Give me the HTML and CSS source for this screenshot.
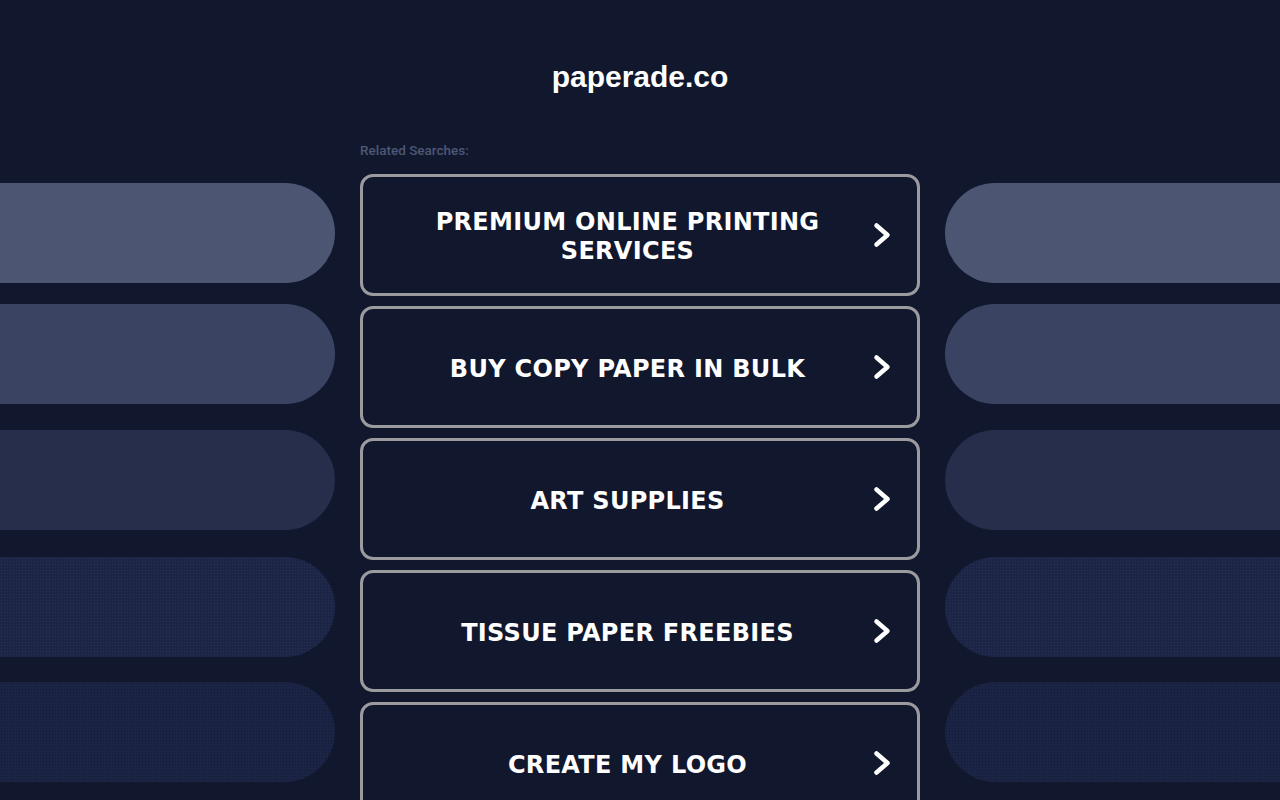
FILE: index.html
```html
<!DOCTYPE html>
<html lang="en">
<head>
<meta charset="utf-8">
<title>paperade.co</title>
<link rel="stylesheet" href="styles.css">
</head>
<body>
<div class="page">
  <aside class="side side-left">
    <div class="pill pill-1"></div>
    <div class="pill pill-2"></div>
    <div class="pill pill-3"></div>
    <div class="pill pill-4"></div>
    <div class="pill pill-5"></div>
  </aside>
  <main class="center">
    <h1 class="domain">paperade.co</h1>
    <div class="related">Related Searches:</div>
    <ul class="links">
      <li><a class="link" href="#"><span class="label">PREMIUM ONLINE PRINTING SERVICES</span><svg class="chev" viewBox="0 0 18 26"><path d="M3.5 3.5 L14.5 13 L3.5 22.5"/></svg></a></li>
      <li><a class="link" href="#"><span class="label">BUY COPY PAPER IN BULK</span><svg class="chev" viewBox="0 0 18 26"><path d="M3.5 3.5 L14.5 13 L3.5 22.5"/></svg></a></li>
      <li><a class="link" href="#"><span class="label">ART SUPPLIES</span><svg class="chev" viewBox="0 0 18 26"><path d="M3.5 3.5 L14.5 13 L3.5 22.5"/></svg></a></li>
      <li><a class="link" href="#"><span class="label">TISSUE PAPER FREEBIES</span><svg class="chev" viewBox="0 0 18 26"><path d="M3.5 3.5 L14.5 13 L3.5 22.5"/></svg></a></li>
      <li><a class="link" href="#"><span class="label">CREATE MY LOGO</span><svg class="chev" viewBox="0 0 18 26"><path d="M3.5 3.5 L14.5 13 L3.5 22.5"/></svg></a></li>
    </ul>
  </main>
  <aside class="side side-right">
    <div class="pill pill-1"></div>
    <div class="pill pill-2"></div>
    <div class="pill pill-3"></div>
    <div class="pill pill-4"></div>
    <div class="pill pill-5"></div>
  </aside>
</div>
</body>
</html>
```
FILE: styles.css
```css
html, body {
  margin: 0;
  padding: 0;
  background: #11172d;
  overflow: hidden;
}
.page {
  display: grid;
  grid-template-columns: 335px 560px 335px;
  column-gap: 25px;
  height: 800px;
}
.side {
  display: flex;
  flex-direction: column;
  padding-top: 183px;
}
.pill {
  height: 100px;
  flex: none;
}
.side-left .pill { border-radius: 0 50px 50px 0; }
.side-right .pill { border-radius: 50px 0 0 50px; }
.pill-1 { background: #4c5672; }
.pill-2 { background: #3a4361; margin-top: 21px; }
.pill-3 { background: #262e4c; margin-top: 26px; }
.pill-4 {
  background-color: #1c2546;
  background-image: radial-gradient(circle, rgba(60,75,110,0.35) 0.6px, transparent 0.8px);
  background-size: 3px 3px;
  margin-top: 27px;
}
.pill-5 {
  background-color: #1b2444;
  background-image: radial-gradient(circle, rgba(10,15,35,0.5) 0.6px, transparent 0.8px);
  background-size: 3px 3px;
  margin-top: 25px;
}
.center {
  display: flex;
  flex-direction: column;
}
.domain {
  margin: 0;
  padding-top: 57px;
  height: 40px;
  line-height: 40px;
  text-align: center;
  font-family: "Liberation Sans", Arial, sans-serif;
  font-weight: bold;
  font-size: 30px;
  color: #ffffff;
}
.related {
  margin-top: 45px;
  height: 16px;
  line-height: 16px;
  font-family: Roboto, "Liberation Sans", sans-serif;
  font-weight: 500;
  font-size: 13.5px;
  color: #4d5875;
}
.links {
  list-style: none;
  margin: 16px 0 0;
  padding: 0;
  display: flex;
  flex-direction: column;
  gap: 10px;
}
.link {
  box-sizing: border-box;
  height: 122px;
  border: 3px solid #9b9b9f;
  border-radius: 13px;
  display: flex;
  align-items: center;
  padding: 4px 26px 0 30px;
  text-decoration: none;
  color: #ffffff;
}
.label {
  flex: 1;
  text-align: center;
  font-family: "DejaVu Sans", Verdana, sans-serif;
  font-weight: bold;
  font-size: 24px;
  line-height: 29px;
  letter-spacing: 0.3px;
}
.chev {
  flex: none;
  width: 18px;
  height: 26px;
  margin-left: 11px;
  margin-top: -4px;
}
.chev path {
  fill: none;
  stroke: #ffffff;
  stroke-width: 4.5;
  stroke-linecap: round;
  stroke-linejoin: round;
}
```
